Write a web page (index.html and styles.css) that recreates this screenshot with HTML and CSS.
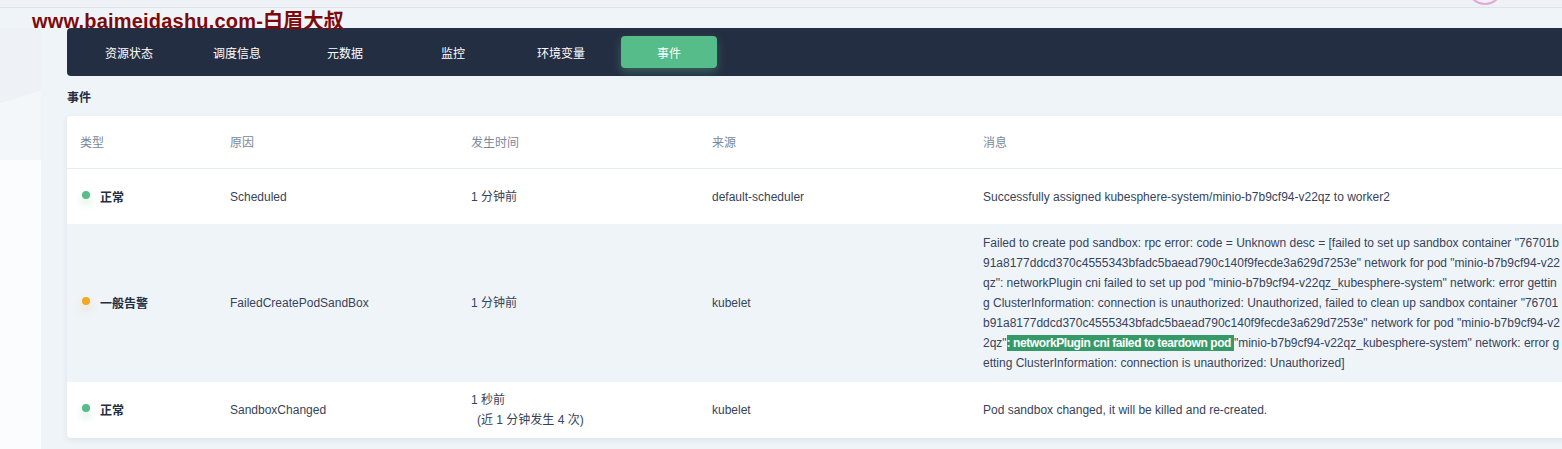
FILE: index.html
```html
<!DOCTYPE html>
<html lang="zh">
<head>
<meta charset="utf-8">
<title>事件</title>
<link rel="stylesheet" href="styles.css">
</head>
<body>
<div class="topbar"></div>
<div class="avatar"></div>
<div class="watermark">www.baimeidashu.com-白眉大叔</div>
<div class="page">
  <div class="side"></div>
  <div class="main">
    <nav class="tabs">
      <div class="tab">资源状态</div>
      <div class="tab">调度信息</div>
      <div class="tab">元数据</div>
      <div class="tab">监控</div>
      <div class="tab">环境变量</div>
      <div class="tab active">事件</div>
    </nav>
    <div class="heading">事件</div>
    <div class="card">
      <div class="row head">
        <div class="cell first">类型</div>
        <div class="cell">原因</div>
        <div class="cell">发生时间</div>
        <div class="cell">来源</div>
        <div class="cell">消息</div>
      </div>
      <div class="row">
        <div class="cell first"><span class="status"><i class="dot ok"></i>正常</span></div>
        <div class="cell">Scheduled</div>
        <div class="cell">1 分钟前</div>
        <div class="cell">default-scheduler</div>
        <div class="cell msg">Successfully assigned kubesphere-system/minio-b7b9cf94-v22qz to worker2</div>
      </div>
      <div class="row hover">
        <div class="cell first"><span class="status"><i class="dot warn"></i>一般告警</span></div>
        <div class="cell">FailedCreatePodSandBox</div>
        <div class="cell">1 分钟前</div>
        <div class="cell">kubelet</div>
        <div class="cell msg">Failed to create pod sandbox: rpc error: code = Unknown desc = [failed to set up sandbox container "76701b91a8177ddcd370c4555343bfadc5baead790c140f9fecde3a629d7253e" network for pod "minio-b7b9cf94-v22qz": networkPlugin cni failed to set up pod "minio-b7b9cf94-v22qz_kubesphere-system" network: error getting ClusterInformation: connection is unauthorized: Unauthorized, failed to clean up sandbox container "76701b91a8177ddcd370c4555343bfadc5baead790c140f9fecde3a629d7253e" network for pod "minio-b7b9cf94-v22qz"<mark class="hl">: networkPlugin cni failed to teardown pod </mark>"minio-b7b9cf94-v22qz_kubesphere-system" network: error getting ClusterInformation: connection is unauthorized: Unauthorized]</div>
      </div>
      <div class="row last">
        <div class="cell first"><span class="status"><i class="dot ok"></i>正常</span></div>
        <div class="cell">SandboxChanged</div>
        <div class="cell time"><span>1 秒前</span><span class="sub">(近 1 分钟发生 4 次)</span></div>
        <div class="cell">kubelet</div>
        <div class="cell msg">Pod sandbox changed, it will be killed and re-created.</div>
      </div>
    </div>
  </div>
</div>
</body>
</html>
```

FILE: styles.css
```css
html, body {
  margin: 0;
  padding: 0;
  width: 1562px;
  height: 449px;
  overflow: hidden;
}
body {
  background: #eff4f9;
  font-family: "Liberation Sans", Arial, "Noto Sans CJK SC", sans-serif;
  font-size: 12px;
  color: #36435c;
  position: relative;
}
.topbar {
  height: 7px;
  background: #eef1f5;
  border-bottom: 1px solid #dee3e9;
}
.avatar {
  position: absolute;
  left: 1467px;
  top: -31px;
  width: 32px;
  height: 32px;
  border-radius: 50%;
  border: 2px solid #d99ae0;
  border-bottom-color: #e8a6d6;
  border-left-color: #c99be6;
}
.watermark {
  position: absolute;
  left: 32px;
  top: 9px;
  z-index: 5;
  font-family: "Liberation Sans", "Noto Sans CJK SC", sans-serif;
  font-weight: bold;
  font-size: 20px;
  line-height: 24px;
  color: #7d0a0a;
  letter-spacing: 0.2px;
}
.page {
  display: flex;
  height: 441px;
}
.side {
  width: 41px;
  flex: none;
  background:
    linear-gradient(162deg, #eef2f6 0 52%, transparent 52%) 0 20px / 41px 132px no-repeat,
    linear-gradient(to bottom, transparent 0 20px, #f4f7fa 20px 152px, #fbfcfd 152px),
    #eff4f9;
}
.main {
  margin-left: 26px;
  padding-top: 20px;
  width: 1515px;
  flex: none;
}
.tabs {
  height: 48px;
  box-sizing: border-box;
  background: #242e42;
  border-radius: 4px;
  padding: 8px 14px;
  display: flex;
  gap: 12px;
}
.tab {
  width: 96px;
  height: 32px;
  border-radius: 4px;
  color: #ffffff;
  display: flex;
  align-items: center;
  justify-content: center;
  font-family: "Noto Sans CJK SC", sans-serif;
  font-size: 12px;
}
.tab.active {
  background: #55bc8a;
  box-shadow: 0 4px 10px rgba(85, 188, 138, 0.35);
}
.heading {
  padding: 11px 0 9px;
  line-height: 20px;
  font-weight: bold;
  color: #242e42;
  font-family: "Noto Sans CJK SC", sans-serif;
}
.card {
  background: #ffffff;
  border-radius: 4px;
  box-shadow: 0 2px 6px rgba(36, 46, 66, 0.08);
  overflow: hidden;
}
.row {
  display: grid;
  grid-template-columns: 163px 241px 241px 271px 1fr;
  min-height: 55px;
  box-sizing: border-box;
  padding: 8px 0;
  align-items: center;
  line-height: 20px;
}
.row.head {
  min-height: 53px;
  border-bottom: 1px solid #e8edf2;
  color: #79879c;
  font-family: "Noto Sans CJK SC", sans-serif;
}
.row.hover {
  background: #eff4f9;
}
.row.last {
  min-height: 56px;
}
.cell.first {
  padding-left: 13px;
}
.cell.msg {
  padding-right: 22px;
  word-break: break-all;
  padding-top: 1px;
  padding-bottom: 1px;
}
.status {
  display: flex;
  align-items: center;
  font-weight: bold;
  color: #242e42;
  font-family: "Noto Sans CJK SC", sans-serif;
}
.dot {
  width: 8px;
  height: 8px;
  border-radius: 50%;
  margin-left: 2px;
  margin-right: 10px;
  transform: translateY(-2px);
}
.dot.ok {
  background: #55bc8a;
  box-shadow: 0 5px 8px rgba(85, 188, 138, 0.3);
}
.dot.warn {
  background: #f5a623;
  box-shadow: 0 5px 8px rgba(245, 166, 35, 0.25);
}
.time {
  display: flex;
  flex-direction: column;
}
.time .sub {
  padding-left: 6px;
}
.hl {
  background: #369a68;
  color: #ffffff;
  font-weight: bold;
  letter-spacing: -0.42px;
  padding: 1px 0;
}
```
